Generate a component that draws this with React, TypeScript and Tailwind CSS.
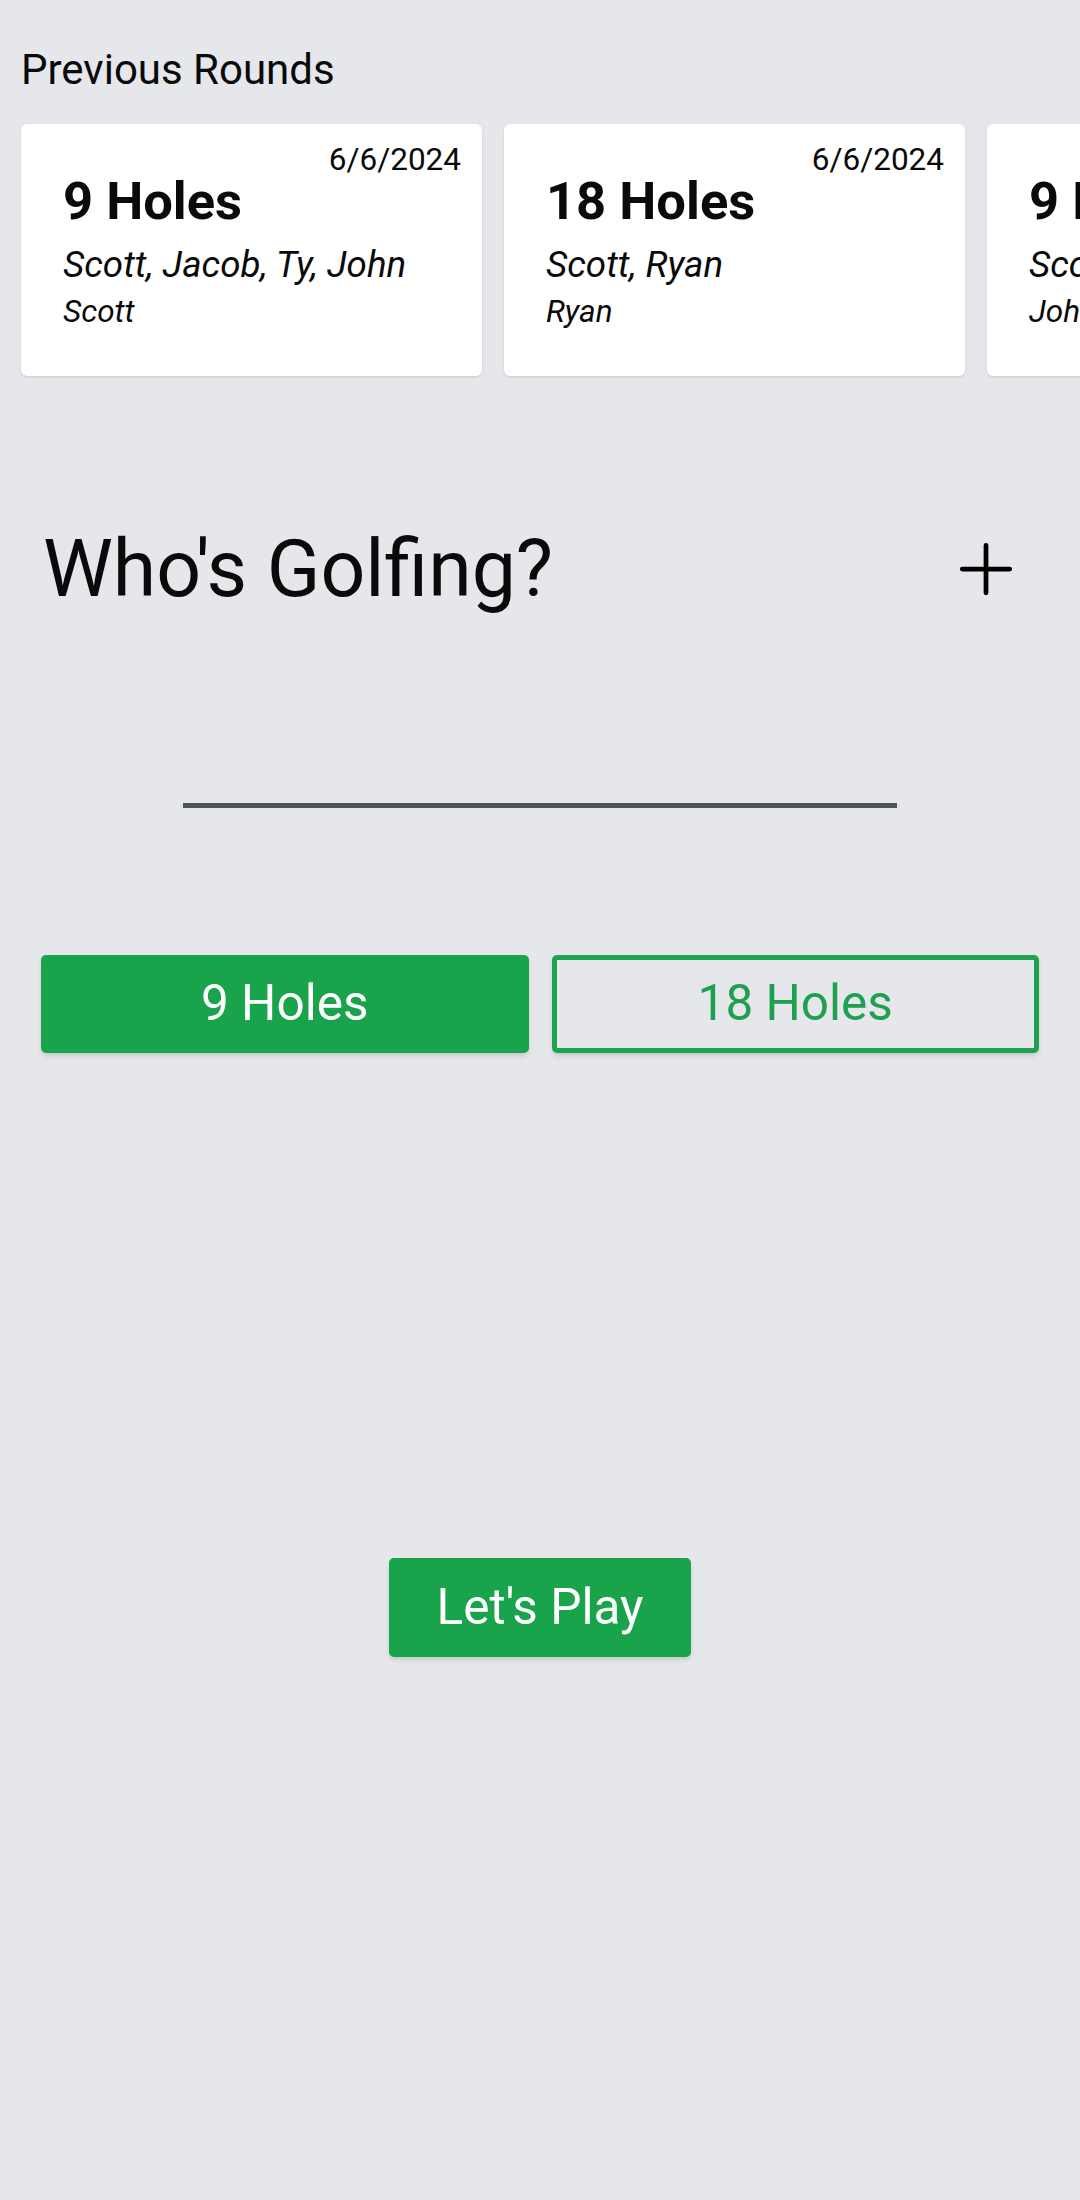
const rounds = [
  { holes: '9 Holes', date: '6/6/2024', players: 'Scott, Jacob, Ty, John', winner: 'Scott' },
  { holes: '18 Holes', date: '6/6/2024', players: 'Scott, Ryan', winner: 'Ryan' },
  { holes: '9 Holes', date: '6/6/2024', players: 'Scott, Jacob, Ty, John', winner: 'John' },
];

function PlusIcon() {
  return (
    <svg viewBox="0 0 24 24" fill="none" stroke="currentColor" strokeWidth={1.5} className="h-[76px] w-[76px]">
      <path strokeLinecap="round" strokeLinejoin="round" d="M12 4.5v15m7.5-7.5h-15" />
    </svg>
  );
}

export default function App() {
  return (
    <div className="min-h-screen overflow-hidden bg-[#e5e7eb] font-[Roboto,sans-serif] text-[#0a0a0a]">
      <h2 className="pl-[21px] pt-[38px] text-[42px] leading-[63px]">Previous Rounds</h2>

      {/* horizontal list, last card runs off the edge */}
      <div className="mt-[19px] flex gap-[22px] overflow-hidden px-[21px] py-[4px]">
        {rounds.map((r, i) => (
          <div
            key={i}
            className="relative h-[252px] w-[461px] shrink-0 rounded-[6px] bg-white pl-[42px] pt-[41px] shadow-sm"
          >
            <span className="absolute right-[21px] top-[15px] text-[31.5px] leading-[42px]">{r.date}</span>
            <h3 className="text-[52.5px] font-bold leading-[73.5px]">{r.holes}</h3>
            <p className="text-[36.75px] italic leading-[52.5px]">{r.players}</p>
            <p className="text-[31.5px] italic leading-[42px]">{r.winner}</p>
          </div>
        ))}
      </div>

      <div className="mt-[142px] flex items-center justify-between pl-[43px] pr-[56px]">
        <h1 className="text-[78.75px] leading-[94.5px]">Who's Golfing?</h1>
        <button className="text-black">
          <PlusIcon />
        </button>
      </div>

      <input
        type="text"
        className="mx-auto mt-[126px] block h-[65px] w-[714px] border-b-[5px] border-[#50535d] bg-transparent text-[42px] outline-none"
      />

      <div className="mt-[147px] grid grid-cols-2 gap-[23px] px-[41px]">
        <button className="h-[98px] rounded-[5px] bg-[#19a34b] text-[49.5px] text-white shadow-md">9 Holes</button>
        <button className="h-[98px] rounded-[5px] border-[5px] border-[#1ea24f] text-[49.5px] text-[#1f9f50] shadow-md">
          18 Holes
        </button>
      </div>

      <div className="mt-[505px] flex justify-center">
        <button className="h-[99px] rounded-[5px] bg-[#19a34b] px-[48px] text-[49.5px] text-white shadow-md">
          Let's Play
        </button>
      </div>
    </div>
  );
}
